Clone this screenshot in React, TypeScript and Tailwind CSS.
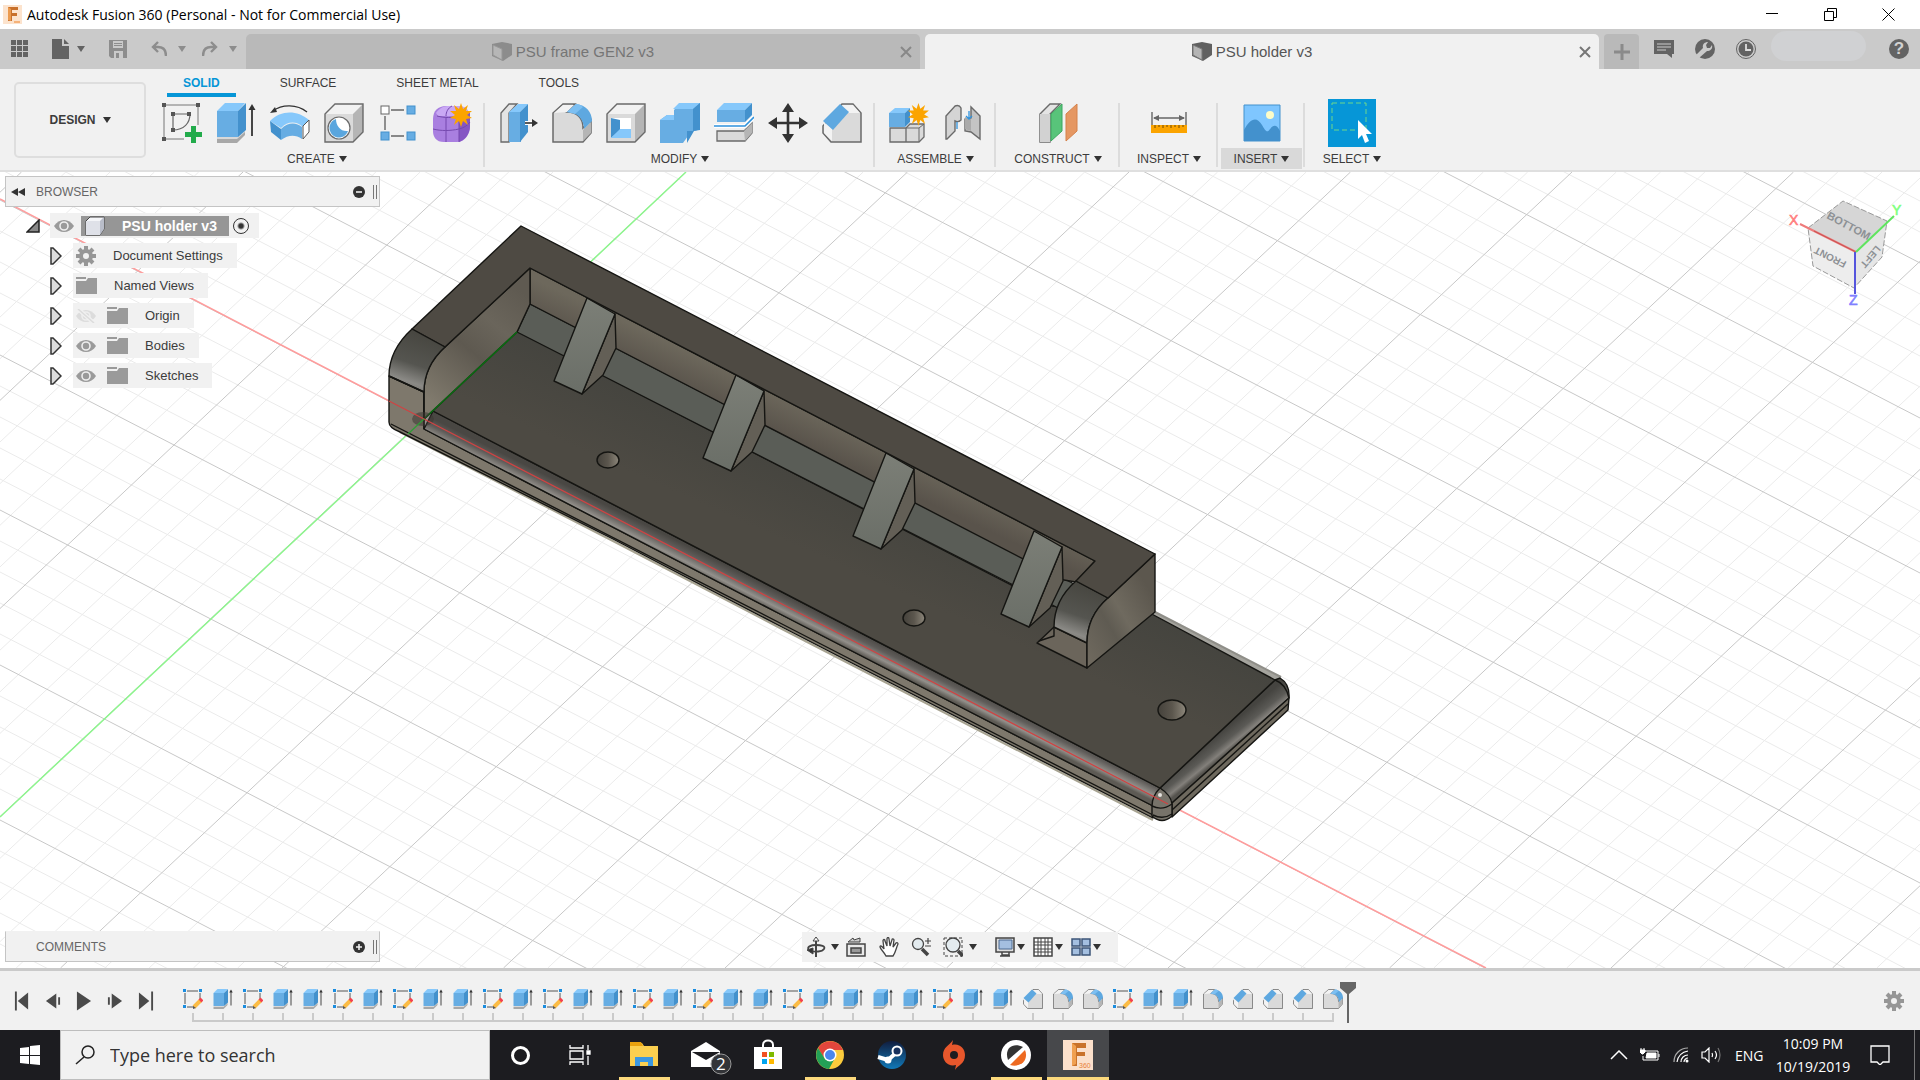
import React from "react";
import type { ReactNode } from "react";
import clsx from "clsx";

interface IconProps {
  className?: string;
}

const STROKE = "#6a6a6a";

function Caret({ className = "fill-[#333]" }: IconProps) {
  return (
    <svg viewBox="0 0 8 6" className={clsx("w-2 h-[6px] shrink-0", className)}>
      <path d="M0 0h8L4 6z" />
    </svg>
  );
}

function Svg40({ className = "size-10", children }: { className?: string; children: ReactNode }) {
  return (
    <svg viewBox="0 0 40 40" className={clsx("shrink-0", className)} fill="none">
      {children}
    </svg>
  );
}

/* ---------- ribbon icons ---------- */

function SketchIcon() {
  return (
    <Svg40>
      <path d="M2 2h34v20M2 2v34h20" stroke="#777" strokeWidth="1" />
      <path d="M11 11h17M11 11v16M28 11c0 9-6 16-17 16" stroke="#666" strokeWidth="1.2" />
      {[[0, 0], [34, 0], [0, 34], [9, 9], [25, 9], [9, 25]].map(([x, y]) => (
        <rect key={`${x}-${y}`} x={x} y={y} width="4" height="4" fill="#555" />
      ))}
      <path d="M29 23h5v6h6v5h-6v6h-5v-6h-6v-5h6z" fill="#22ab4b" />
    </Svg40>
  );
}

function ExtrudeIcon({ className }: IconProps) {
  return (
    <Svg40 className={className}>
      <path d="M1 36h19l9-8v4l-8 8H1z" fill="#a8a8a8" />
      <path d="M1 34h20l8-8v3l-8 7H1z" fill="#d8d8d8" />
      <path d="M1 8l8-8h20l-7 8z" fill="#86c8fb" />
      <path d="M1 8h21v26H1z" fill="#67ade3" />
      <path d="M22 8l8-8v27l-8 7z" fill="#4391cd" />
      <path d="M36 33V4" stroke="#333" strokeWidth="1.8" />
      <path d="M32.500 7L36 1l3.500 6z" fill="#333" />
    </Svg40>
  );
}

function RevolveIcon() {
  return (
    <Svg40>
      <path d="M3 8C12 1 27 1 37 9" stroke="#333" strokeWidth="1.300" />
      <path d="M0 10l5-6 2 5z" fill="#333" />
      <path d="M0 18c11-11 27-11 39-1l-6 7c-7-6-15-6-22 1z" fill="#86c8fb" />
      <path d="M0 18l11 8v11L1 29z" fill="#4391cd" />
      <path d="M11 26c7-7 15-7 21-2v12c-7-5-14-4-21 1z" fill="#67ade3" />
      <path d="M33 23l6-6v12l-6 7z" fill="#fff" stroke="#555" />
    </Svg40>
  );
}

function HoleIcon() {
  return (
    <Svg40>
      <path d="M1 11L11 1h28L29 11z" fill="#f2f2f2" />
      <path d="M29 11L39 1v28L29 39z" fill="#b5b5b5" />
      <path d="M1 11h28v28H1z" fill="#dadada" />
      <path d="M1 11L11 1h28v28L29 39H1z" stroke={STROKE} strokeWidth="1.400" />
      <circle cx="15" cy="25" r="11" fill="#fff" stroke={STROKE} strokeWidth="1.200" />
      <path d="M12 16a9.500 9.500 0 1 0 12 12c-7 1-12-5-12-12z" fill="#5aa6de" />
    </Svg40>
  );
}

function PatternIcon() {
  return (
    <Svg40>
      <path d="M13 7h13M7 13v14M13 33h13" stroke="#666" strokeWidth="1.400" />
      <rect x="3" y="3" width="8" height="8" fill="#fff" stroke="#666" />
      <rect x="29" y="3" width="8" height="8" fill="#67ade3" stroke="#4391cd" />
      <rect x="3" y="29" width="8" height="8" fill="#67ade3" stroke="#4391cd" />
      <rect x="29" y="29" width="8" height="8" fill="#67ade3" stroke="#4391cd" />
    </Svg40>
  );
}

const STAR = "M11 0l2 6 5-4-2 6 6 0-5 4 5 3-6 1 2 6-5-4-2 6-2-6-5 4 2-6-6-1 5-3-5-4 6 0-2-6 5 4z";

function FormIcon() {
  return (
    <Svg40>
      <path d="M1 16C1 8 6 3 14 3h12c8 0 12 5 12 12v8c0 8-5 16-13 16H12C4 39 1 34 1 28z" fill="#a97fe0" />
      <path d="M4 10c4-6 9-7 13-7h10c5 0 8 3 10 6-5 3-6 4-9 4H6z" fill="#c9a8f4" />
      <path d="M27 14c5 0 9-3 11-5v14c0 8-5 14-11 16z" fill="#8656c4" />
      <path d="M1 26c8 2 17 2 26 0 5-1 9-4 11-7M14 14v25M27 14v25M5 13c8 2 15 2 22 0M14 13c0-4 2-8 6-10" stroke="#7549ae" />
      <path d={STAR} fill="#fba400" transform="translate(18 0)" />
    </Svg40>
  );
}

function PressPullIcon() {
  return (
    <Svg40>
      <path d="M3 10l8-9h8l-8 9v29H3z" fill="#e4e4e4" stroke={STROKE} strokeWidth="1.300" />
      <path d="M11 9l9-8h10l-8 8z" fill="#86c8fb" />
      <path d="M11 9h12v30H11z" fill="#67ade3" />
      <path d="M22 9l8-8v28l-8 10z" fill="#4391cd" />
      <path d="M27 20h8" stroke="#fff" strokeWidth="4" />
      <path d="M27 20h8" stroke="#333" strokeWidth="1.600" />
      <path d="M34 16l6 4-6 4z" fill="#333" />
    </Svg40>
  );
}

function FilletIcon({ className }: IconProps) {
  return (
    <Svg40 className={className}>
      <path d="M1 10L11 1h12L15 9c10 0 16 6 16 16l8-8v13l-8 9H1z" fill="#dadada" stroke={STROKE} strokeWidth="1.500" />
      <path d="M2 10L11 2h11l-7 7z" fill="#f3f3f3" />
      <path d="M31 27l8-8v11l-8 8z" fill="#b5b5b5" />
      <path d="M15 9l9-8c10 1 16 8 16 17l-8 8c0-10-7-17-17-17z" fill="#5ea8e0" />
      <path d="M15 9l9-8c3 0 5 1 7 3l-8 7z" fill="#7cbff2" />
    </Svg40>
  );
}

function ShellIcon() {
  return (
    <Svg40>
      <path d="M1 11L11 1h28L29 11z" fill="#f2f2f2" />
      <path d="M29 11L39 1v28L29 39z" fill="#b5b5b5" />
      <path d="M1 11h28v28H1z" fill="#dadada" />
      <path d="M1 11L11 1h28v28L29 39H1z" stroke={STROKE} strokeWidth="1.400" />
      <path d="M5 15h20v20H5z" fill="#fff" />
      <path d="M5 15l9 2v10l-9 8z" fill="#4391cd" />
      <path d="M5 35l9-9h11v9z" fill="#86c8fb" />
    </Svg40>
  );
}

function CombineIcon() {
  return (
    <Svg40>
      <path d="M0 17l7-5h7V7l7-7h19v26l-5 2h-7v5l-5 7H0z" fill="#67ade3" />
      <path d="M13 6l6-6h21l-7 6zM0 17l7-5h7v5z" fill="#86c8fb" />
      <path d="M33 6l7-6v27l-7 1zM27 28h7l-7 12z" fill="#4391cd" />
    </Svg40>
  );
}

function SplitIcon() {
  return (
    <Svg40>
      <path d="M3 28h27l8-8v10l-7 8H3z" fill="#dadada" stroke={STROKE} strokeWidth="1.300" />
      <path d="M30 28l8-8v10l-7 8z" fill="#b5b5b5" />
      <path d="M3 7l7-7h28l-7 7z" fill="#86c8fb" />
      <path d="M3 7h28v12H3z" fill="#67ade3" />
      <path d="M31 7l7-7v12l-7 7z" fill="#4391cd" />
      <path d="M0 23h31l9-9" stroke="#fff" strokeWidth="4" />
      <path d="M0 23h31l9-9" stroke="#3093dd" strokeWidth="1.600" />
    </Svg40>
  );
}

function MoveIcon() {
  return (
    <Svg40>
      <path d="M20 6v28M6 20h28" stroke="#333" strokeWidth="2.600" />
      <path d="M20 0l6 9H14zM20 40l6-9H14zM0 20l9-6v12zM40 20l-9-6v12z" fill="#333" />
    </Svg40>
  );
}

function ChamferIcon({ className }: IconProps) {
  return (
    <Svg40 className={className}>
      <path d="M1 23L20 1h11l8 9v29H9l-8-9z" fill="#dadada" stroke={STROKE} strokeWidth="1.500" />
      <path d="M20 2h11l7 8h-12z" fill="#f3f3f3" />
      <path d="M2 19v11l8 8V26z" fill="#f3f3f3" />
      <path d="M1 18L18 1l9 8-16 18z" fill="#5ea8e0" />
    </Svg40>
  );
}

function ComponentIcon() {
  return (
    <Svg40>
      <path d="M1 25h16v14H1zM17 25l4-4h14v13l-5 5H17z" fill="#dadada" stroke={STROKE} strokeWidth="1.300" />
      <path d="M17 25h13v14M30 25l5-4" stroke={STROKE} />
      <path d="M0 10l6-5h15l-5 5z" fill="#86c8fb" />
      <path d="M0 10h16v14H0z" fill="#67ade3" />
      <path d="M16 10l5-5v14l-5 5z" fill="#4391cd" />
      <path d={STAR} fill="#fba400" transform="translate(19 0) scale(.95)" />
    </Svg40>
  );
}

function JointIcon() {
  return (
    <Svg40>
      <path d="M3 13l9-10c3-1 5 0 6 2v12c-2 2-4 2-6 1v10l-8 8H3z" fill="#d4d4d4" stroke={STROKE} strokeWidth="1.400" />
      <path d="M37 13L28 4v11l-6 1v12l6 1 9 7z" fill="#c4c4c4" stroke={STROKE} strokeWidth="1.400" />
      <path d="M22 14v12l6 2V16z" fill="#aaa" />
      <path d="M14 19v7M26 8v8M23 13l3 3 3-3" stroke="#3093dd" strokeWidth="1.300" />
    </Svg40>
  );
}

function PlaneIcon() {
  return (
    <Svg40>
      <path d="M2 11L12 1h10L12 11v28H2z" fill="#e4e4e4" stroke={STROKE} strokeWidth="1.400" />
      <path d="M2 11h10v28H2z" fill="#d2d2d2" />
      <path d="M13 11L24 1v27L13 38z" fill="#58c47a" stroke="#3ba75e" />
      <path d="M28 11L39 1v27L28 38z" fill="#e59762" stroke="#d5814b" />
    </Svg40>
  );
}

function MeasureIcon() {
  return (
    <Svg40>
      <path d="M3 9v13M37 9v13M5 15h30" stroke="#666" strokeWidth="1.400" />
      <path d="M4 15l6-3v6zM36 15l-6-3v6z" fill="#666" />
      <path d="M2 22h36v8H2z" fill="#fba400" />
      <path d="M6 22v3M10 22v2M14 22v3M18 22v2M22 22v3M26 22v2M30 22v3M34 22v2" stroke="#734b00" />
    </Svg40>
  );
}

function CanvasIcon() {
  return (
    <Svg40>
      <path d="M2 2h36v36H2z" fill="#7fc6ff" stroke="#4391cd" />
      <circle cx="28" cy="12" r="4" fill="#fdfcc8" />
      <path d="M2 27c6-12 13-14 18-5 3 5 5 9 8 4 4-5 7-4 10 2v10H2z" fill="#4391cd" />
    </Svg40>
  );
}

function SelectIcon() {
  return (
    <svg viewBox="0 0 48 48" className="size-12 bg-[#0696d7]">
      <rect x="4" y="4" width="34" height="27" fill="none" stroke="#6ed78a" strokeDasharray="5 3" />
      <path d="M30 21v19l4-4 3 8 4-2-3-7h6z" fill="#fff" />
    </svg>
  );
}

interface RibbonGroup {
  label: string;
  icons: (() => ReactNode)[];
  width: string;
  active?: boolean;
}

const ribbonGroups: RibbonGroup[] = [
  { label: "CREATE", icons: [SketchIcon, ExtrudeIcon, RevolveIcon, HoleIcon, PatternIcon, FormIcon], width: "w-[330px] pr-[6px]" },
  { label: "MODIFY", icons: [PressPullIcon, FilletIcon, ShellIcon, CombineIcon, SplitIcon, MoveIcon, ChamferIcon], width: "w-[390px]" },
  { label: "ASSEMBLE", icons: [ComponentIcon, JointIcon], width: "w-[121px]" },
  { label: "CONSTRUCT", icons: [PlaneIcon], width: "w-[124px]" },
  { label: "INSPECT", icons: [MeasureIcon], width: "w-[98px]" },
  { label: "INSERT", icons: [CanvasIcon], width: "w-[87px]", active: true },
  { label: "SELECT", icons: [SelectIcon], width: "w-[94px]" }
];

/* ---------- title and tab bars ---------- */

function TitleBar() {
  return (
    <header className="flex h-[29px] items-center bg-white pl-[3px] pr-[25px] font-['Open_Sans','Noto_Sans',sans-serif] text-black">
      <svg viewBox="0 0 19 19" className="size-[19px]">
        <path d="M0 0h19v19H0z" fill="#fce3cd" />
        <path d="M5 2h10v3H9v3h5v3H9v5H5z" fill="#c8702b" />
        <path d="M5 2l3 2v12l-3-1z" fill="#eb9a4e" />
        <path d="M11 16h6v2h-6z" fill="#f5b27a" />
      </svg>
      <h1 className="ml-[5px] grow text-[14px] leading-5">Autodesk Fusion 360 (Personal - Not for Commercial Use)</h1>
      <div className="flex gap-[45px]">
        <button aria-label="Minimize">
          <svg viewBox="0 0 13 13" className="size-[13px]" stroke="#000"><path d="M0 5.500h12" /></svg>
        </button>
        <button aria-label="Restore">
          <svg viewBox="0 0 13 13" className="size-[13px]" fill="none" stroke="#000"><path d="M.5 3.500h9v9h-9zM3.500 3V.5h9v9H10" /></svg>
        </button>
        <button aria-label="Close">
          <svg viewBox="0 0 13 13" className="size-[13px]" stroke="#000"><path d="M.5.5l12 12M12.500.5l-12 12" /></svg>
        </button>
      </div>
    </header>
  );
}

function DocCube({ dim }: { dim?: boolean }) {
  return (
    <svg viewBox="0 0 20 20" className={clsx("size-5", dim && "opacity-50")}>
      <path d="M0 2l10-2 10 2v11l-9 6L0 14z" fill="#606060" />
      <path d="M1 3l9 4v11l-9-5z" fill="#b4b4b4" stroke="#777" />
    </svg>
  );
}

function DocTab({ title, active }: { title: string; active?: boolean }) {
  return (
    <div className={clsx("flex h-[35px] flex-1 items-center rounded-t-[5px] pr-2", active ? "bg-[#f1f1f1] text-[#555]" : "bg-[#b9b9b9] text-[#757575]")}>
      <button className="flex grow items-center justify-center gap-1 text-[15px] leading-5">
        <DocCube dim={!active} />
        {title}
      </button>
      <button aria-label={`Close ${title}`}>
        <svg viewBox="0 0 12 12" className="size-3" stroke={active ? "#777" : "#888"} strokeWidth="2"><path d="M1 1l10 10M11 1L1 11" /></svg>
      </button>
    </div>
  );
}

function UndoIcon({ className }: IconProps) {
  return (
    <svg viewBox="0 0 16 16" className={clsx("size-4", className)} fill="none" stroke="#8d8d8d" strokeWidth="2.400">
      <path d="M7 1L2 6l5 5M2 6h5c5 0 8 3 8 9" />
    </svg>
  );
}

function TabBar() {
  return (
    <nav className="flex h-10 items-end bg-[#cacaca]">
      <div className="flex h-10 w-[246px] items-center pl-[11px]">
        <button aria-label="Data panel">
          <svg viewBox="0 0 18 18" className="size-[18px]" fill="#636363">
            {[0, 6, 12].map(x => [0, 6, 12].map(y => <rect key={`${x}-${y}`} x={x} y={y} width="5" height="5" />))}
          </svg>
        </button>
        <button aria-label="File" className="ml-[23px] flex items-center gap-2">
          <svg viewBox="0 0 17 20" className="h-5 w-[17px]" fill="#636363">
            <path d="M0 0h10v7h7v13H0z" />
            <path d="M12 0l5 5h-5z" />
          </svg>
          <Caret className="fill-[#636363]" />
        </button>
        <button aria-label="Save" className="ml-6">
          <svg viewBox="0 0 18 18" className="size-[18px]">
            <path d="M0 0h18v18H2l-2-2z" fill="#8d8d8d" />
            <path d="M4 1h10v7H4zM5 11h9v7H5z" fill="#cacaca" />
            <path d="M5 3h8v1H5zM5 5h8v1H5zM7 13h3v5H7z" fill="#8d8d8d" />
          </svg>
        </button>
        <button aria-label="Undo" className="ml-6 flex items-center gap-[11px]">
          <UndoIcon />
          <Caret className="fill-[#8d8d8d]" />
        </button>
        <button aria-label="Redo" className="ml-4 flex items-center gap-[11px]">
          <UndoIcon className="-scale-x-100" />
          <Caret className="fill-[#8d8d8d]" />
        </button>
      </div>
      <div className="flex grow gap-[5px]">
        <DocTab title="PSU frame GEN2 v3" />
        <DocTab title="PSU holder v3" active />
      </div>
      <button aria-label="New tab" className="ml-[5px] flex h-[35px] w-[35px] items-center justify-center rounded-t-[4px] bg-[#b9b9b9]">
        <svg viewBox="0 0 16 16" className="size-4" stroke="#8a8a8a" strokeWidth="3"><path d="M8 0v16M0 8h16" /></svg>
      </button>
      <div className="flex h-10 items-center pl-[15px] pr-[11px]">
        <button aria-label="Notifications">
          <svg viewBox="0 0 20 20" className="size-5">
            <path d="M0 1h20v14h-2v4l-5-4H0z" fill="#636363" />
            <path d="M3 5h14M3 8h14M3 11h9" stroke="#ccc" />
          </svg>
        </button>
        <button aria-label="Extensions" className="ml-[21px]">
          <svg viewBox="0 0 20 20" className="size-5">
            <circle cx="10" cy="10" r="10" fill="#636363" />
            <path d="M4 19l-3-3 7-7c-1-4 2-6 5-6l-2 3 1 3 3 0 2-3c1 4-2 6-5 6z" fill="#cacaca" />
          </svg>
        </button>
        <button aria-label="Job status" className="ml-[21px]">
          <svg viewBox="0 0 20 20" className="size-5">
            <circle cx="10" cy="10" r="9.500" fill="none" stroke="#636363" />
            <circle cx="10" cy="10" r="7.500" fill="#636363" />
            <path d="M10 5v6h5" fill="none" stroke="#ddd" strokeWidth="1.800" />
          </svg>
        </button>
        <button aria-label="Account" className="mb-[6px] ml-[15px] h-[30px] w-[95px] rounded-full bg-[#d0d1d3]" />
        <button aria-label="Help" className="ml-[23px] flex size-5 items-center justify-center rounded-full bg-[#636363] text-[17px] leading-5 font-bold text-[#d2d2d2]">?</button>
      </div>
    </nav>
  );
}

/* ---------- ribbon ---------- */

function Ribbon() {
  return (
    <div className="flex h-[103px] items-start border-b-2 border-[#dfdfdf] bg-[#f1f1f1] pl-[14px] text-[12px] leading-4 text-[#3c3c3c]">
      <button className="mt-[13px] flex h-[76px] w-[132px] items-center justify-center gap-[7px] rounded-[5px] border-2 border-[#dedede] font-bold">
        DESIGN <Caret />
      </button>
      <div className="ml-[9px]">
        <div className="flex gap-7 pl-3">
          {["SOLID", "SURFACE", "SHEET METAL", "TOOLS"].map(tab => (
            <button
              key={tab}
              className={clsx("border-b-4 px-4 pb-[2px] pt-[6px]", tab === "SOLID" ? "border-[#0696d7] font-bold text-[#0696d7]" : "border-transparent")}
            >
              {tab}
            </button>
          ))}
        </div>
        <div className="mt-[2px] flex">
          {ribbonGroups.map((group, i) => (
            <div key={group.label} className={clsx("relative flex flex-col items-center", group.width)}>
              <div className="flex h-12 items-center">
                {group.icons.map((Icon, n) => (
                  <button key={n} aria-label={`${group.label} tool ${n + 1}`} className="flex w-[54px] justify-center">
                    <Icon />
                  </button>
                ))}
              </div>
              <button className={clsx("mt-px flex h-[21px] items-center gap-1 px-[13px]", group.active && "bg-[#d9d9d9]")}>
                {group.label} <Caret />
              </button>
              {i < ribbonGroups.length - 1 && <span className="absolute right-0 top-1 h-16 w-[2px] bg-[#dcdcdc]" />}
            </div>
          ))}
        </div>
      </div>
    </div>
  );
}

/* ---------- viewport drawing ---------- */

const minorSteps = Array.from({ length: 121 }, (_, i) => i - 60);

function Grid() {
  // both families are parallel lines, every fifth one is darker
  return (
    <g strokeWidth="1">
      {[false, true].map(major =>
        minorSteps
          .filter(k => (k % 5 === 0) === major)
          .map(k => {
            const x = 686 + k * 44.3;
            const y = 200 + k * 31;
            return (
              <g key={k} stroke={major ? "#c8c8c8" : "#ebebeb"}>
                <path d={`M${x} 172L${x - 847} 968`} />
                <path d={`M0 ${y}L1920 ${y + 993}`} />
              </g>
            );
          })
      )}
    </g>
  );
}

const ribs = [[0, 0], [149, 77], [299, 155], [447, 233]];
const holes = [[608, 460, 11, 8], [914, 618, 11, 8], [1172, 710, 14, 10]];

function Model() {
  return (
    <g stroke="#151512" strokeWidth="1.400" strokeLinejoin="round">
      <defs>
        <linearGradient id="floor" gradientUnits="userSpaceOnUse" x1="620" y1="360" x2="580" y2="450">
          <stop offset="0" stopColor="#43433e" />
          <stop offset="1" stopColor="#4d4a43" />
        </linearGradient>
        <linearGradient id="edge" gradientUnits="userSpaceOnUse" x1="800" y1="602" x2="791" y2="620">
          <stop offset="0" stopColor="#494743" />
          <stop offset=".35" stopColor="#5f5c59" />
          <stop offset=".75" stopColor="#93908b" />
          <stop offset="1" stopColor="#5d5a54" />
        </linearGradient>
        <linearGradient id="endEdge" gradientUnits="userSpaceOnUse" x1="1218" y1="734" x2="1231" y2="750">
          <stop offset="0" stopColor="#454440" />
          <stop offset=".5" stopColor="#5b5a56" />
          <stop offset=".8" stopColor="#83807b" />
          <stop offset="1" stopColor="#55534e" />
        </linearGradient>
        <linearGradient id="side" gradientUnits="userSpaceOnUse" x1="520" y1="290" x2="430" y2="400">
          <stop offset="0" stopColor="#5f5a51" />
          <stop offset=".3" stopColor="#6a655b" />
          <stop offset=".55" stopColor="#5e5950" />
          <stop offset="1" stopColor="#807a6d" />
        </linearGradient>
        <linearGradient id="wall" gradientUnits="userSpaceOnUse" x1="660" y1="338" x2="645" y2="370">
          <stop offset="0" stopColor="#6d685c" />
          <stop offset="1" stopColor="#59534b" />
        </linearGradient>
        <linearGradient id="round" x1=".4" y1="0" x2=".1" y2="1">
          <stop offset="0" stopColor="#474640" />
          <stop offset=".5" stopColor="#555550" />
          <stop offset=".78" stopColor="#8b8a86" />
          <stop offset="1" stopColor="#65615a" />
        </linearGradient>
        <linearGradient id="rib" x1="0" y1="0" x2="0" y2="1">
          <stop offset="0" stopColor="#7c7f77" />
          <stop offset="1" stopColor="#6a6e67" />
        </linearGradient>
        <linearGradient id="block" x1="1" y1="0" x2="0" y2="1">
          <stop offset=".2" stopColor="#5c574e" />
          <stop offset=".5" stopColor="#6f6a5f" />
          <stop offset=".65" stopColor="#5f5b52" />
          <stop offset="1" stopColor="#716b60" />
        </linearGradient>
        <linearGradient id="hole">
          <stop offset="0" stopColor="#44413b" />
          <stop offset=".5" stopColor="#5b564d" />
          <stop offset="1" stopColor="#8d877b" />
        </linearGradient>
      </defs>

      {/* far rounded edge and underside highlight */}
      <path d="M1148 612L1155 612 1280 677 1275 680z" fill="#a5a49e" stroke="none" />
      <path d="M1155 612L1281 677" stroke="#8f8e88" strokeWidth="2" />
      <path d="M400 432L613 541 780 628 1153 820" stroke="#a7a391" strokeWidth="2" fill="none" />

      {/* base plate */}
      <path d="M389 376L424 392 424 429 780 614 1153 806 1153 818 780 626 613 539 400 432Q389 428 389 422z" fill="#7e786c" />
      <path d="M433 411L1160 788 1153 806 780 614 424 429z" fill="url(#edge)" />
      <path d="M391 424L780 623 1153 815" fill="none" />
      <path d="M1160 788L1275 680 1280 678Q1290 684 1289 698L1172 803z" fill="url(#endEdge)" />
      <path d="M1172 803L1289 698 1288 710 1172 817z" fill="#6e695e" />
      <path d="M1275 680Q1286 684 1289 698" fill="none" />
      <path d="M1172 810L1288 704" fill="none" />
      <path d="M1160 788Q1152 796 1152 806V816Q1162 825 1172 816V804Q1171 795 1160 788z" fill="#77736a" />
      <path d="M1152 806Q1162 811 1172 804M1153 815Q1163 820 1172 814" fill="none" />
      <circle cx="1160" cy="795" r="2" fill="#e5e3df" stroke="none" />
      <path d="M433 411L424 419 517 331 1052 606 1148 612 1275 680 1160 788z" fill="url(#floor)" />

      {/* back wall and chamfer */}
      <path d="M530 304L1080 587 1066 612 517 332z" fill="#5a5d57" />
      <path d="M530 268L1095 561 1076 582 1064 580 530 304z" fill="url(#wall)" />
      <path d="M530 268V304L517 332 424 419V392Q424 366 445 347z" fill="url(#side)" />
      <path d="M424 419L517 332" stroke="#0b6b12" strokeWidth="1.600" />

      {ribs.map(([x, y]) => (
        <g key={x} transform={`translate(${x} ${y})`}>
          <path d="M615 314L616 348 603 375 582 394z" fill="#635f56" />
          <path d="M587 298L615 314 582 394 554 381z" fill="url(#rib)" />
        </g>
      ))}

      {/* right-hand stop */}
      <path d="M1037 643L1054 627 1087 643V668z" fill="#6b655b" />
      <path d="M1039 641L1054 636V627" fill="none" />
      <path d="M1076 581Q1054 600 1054 627L1087 643Q1087 616 1108 598z" fill="url(#round)" />
      <path d="M1155 554V612L1087 668V643Q1087 616 1108 598z" fill="url(#block)" />

      {/* top face */}
      <path d="M521 226L1155 554 1108 598 1076 581 1095 561 530 268 445 347 412 329z" fill="#4e4a43" />
      <path d="M412 329Q389 350 389 376L424 392Q424 366 445 347z" fill="url(#round)" />
      <path d="M389 376L424 392V429" fill="none" />

      {holes.map(([cx, cy, rx, ry]) => (
        <ellipse key={cx} cx={cx} cy={cy} rx={rx} ry={ry} fill="url(#hole)" />
      ))}
      <ellipse cx="423" cy="419" rx="11" ry="7" fill="#3a3732" fillOpacity=".55" stroke="none" />
    </g>
  );
}

function ViewCube() {
  return (
    <g fontFamily="Liberation Sans, Arial, sans-serif" fontWeight="bold">
      <path d="M1808 228L1856 252 1854 288 1813 266z" fill="#ededed" />
      <path d="M1856 252L1887 221 1882 257 1854 288z" fill="#e6e6e6" />
      <path d="M1808 228L1843 201 1887 221 1856 252z" fill="#d6d6d6" />
      <path d="M1808 228L1843 201 1887 221 1882 257 1854 288 1813 266z" fill="none" stroke="#999" strokeDasharray="6 2" />
      <text x="1826" y="218" fontSize="11" fill="#8d9195" transform="rotate(28 1826 218)">BOTTOM</text>
      <text x="1847" y="262" fontSize="10" fill="#8d9195" transform="rotate(207 1847 262)">FRONT</text>
      <text x="1876" y="245" fontSize="10" fill="#8d9195" transform="rotate(130 1876 245)">LEFT</text>
      <path d="M1800 224L1856 252" stroke="#ee7b7b" strokeWidth="2" />
      <path d="M1814 231L1856 252" stroke="#c65050" strokeWidth="1" />
      <path d="M1856 252L1894 216" stroke="#5fe45f" strokeWidth="2" />
      <path d="M1855 252V294" stroke="#5555dd" strokeWidth="2" />
      <g fontSize="14" fontWeight="normal" strokeWidth=".6">
        <text x="1789" y="225" fill="#ff7f7f" stroke="#ff7f7f">X</text>
        <text x="1892" y="215" fill="#7fff7f" stroke="#7fff7f">Y</text>
        <text x="1849" y="305" fill="#8080ff" stroke="#8080ff">Z</text>
      </g>
    </g>
  );
}

function Viewport() {
  return (
    <svg viewBox="0 172 1920 796" preserveAspectRatio="xMidYMid slice" className="absolute inset-0 h-full w-full" role="img" aria-label="Model view">
      <path d="M0 172h1920v796H0z" fill="#fff" />
      <Grid />
      <path d="M0 199L424 419M1168 804L1486 968" stroke="#ff9c9c" strokeWidth="1.500" />
      <path d="M0 817L424 419 686 172" stroke="#8df58d" strokeWidth="1.500" fill="none" />
      <Model />
      <path d="M389 401L424 419 780 603 1168 804" stroke="#cf4343" strokeWidth="1.300" fill="none" />
      <path d="M408 434L424 419" stroke="#2f9c35" strokeWidth="1.300" />
      <ViewCube />
    </svg>
  );
}

/* ---------- browser tree ---------- */

function EyeIcon({ off }: { off?: boolean }) {
  return (
    <svg viewBox="0 0 20 14" className="h-[14px] w-5 shrink-0">
      <path d="M0 7c5-8 15-8 20 0-5 8-15 8-20 0z" fill={off ? "#dcdcdc" : "#9a9a9a"} />
      <circle cx="10" cy="7" r="4" fill="none" stroke="#eee" strokeWidth="1.600" />
      {off && <path d="M2 0l16 14" stroke="#f1f1f1" strokeWidth="4" />}
      {off && <path d="M2 0l16 14" stroke="#dcdcdc" strokeWidth="1.500" />}
    </svg>
  );
}

function FolderIcon() {
  return (
    <svg viewBox="0 0 21 17" className="h-[17px] w-[21px] shrink-0" fill="#9a9a9a">
      <path d="M0 0h10v2H0zM0 4h10l2-3h9v16H0z" />
    </svg>
  );
}

function GearIcon() {
  return (
    <svg viewBox="0 0 20 20" className="size-5 shrink-0">
      <g fill="none" stroke="#969696">
        <circle cx="10" cy="10" r="5" strokeWidth="4" />
        <path d="M10 0v4M10 16v4M0 10h4M16 10h4M3 3l3 3M14 14l3 3M17 3l-3 3M6 14l-3 3" strokeWidth="4" />
      </g>
    </svg>
  );
}

const treeRows = [
  { label: "Document Settings", icon: "gear" },
  { label: "Named Views", icon: "folder" },
  { label: "Origin", icon: "folder", eye: "off" },
  { label: "Bodies", icon: "folder", eye: "on" },
  { label: "Sketches", icon: "folder", eye: "on" }
];

function PanelBar({ title, children, sign, className }: { title: string; children?: ReactNode; sign: string; className?: string }) {
  return (
    <div className={clsx("flex h-[31px] w-[375px] items-center border border-[#c4c4c4] bg-[#f1f1f1] pr-[2px]", className)}>
      <span className="flex w-[30px] pl-[5px]">{children}</span>
      <h2 className="grow text-[12px] leading-4 text-[#666]">{title}</h2>
      <button aria-label={`Toggle ${title}`}>
        <svg viewBox="0 0 12 12" className="size-3">
          <circle cx="6" cy="6" r="6" fill="#333" />
          <path d={sign} stroke="#f1f1f1" strokeWidth="1.600" />
        </svg>
      </button>
      <span className="ml-2 h-[14px] w-1 border-x border-[#777]" />
    </div>
  );
}

function BrowserPanel() {
  return (
    <aside className="relative self-start pl-[5px] pt-1">
      <PanelBar title="BROWSER" sign="M3 6h6">
        <svg viewBox="0 0 14 8" className="h-2 w-[14px]" fill="#333"><path d="M7 0v8L0 4zM14 0v8L7 4z" /></svg>
      </PanelBar>
      <ul className="mt-[6px] flex flex-col gap-[5px] text-[13px] leading-4 text-[#3c3c3c]">
        <li className="flex h-[25px] items-center pl-[21px]">
          <button aria-label="Collapse PSU holder v3">
            <svg viewBox="0 0 14 14" className="size-[14px]"><path d="M13 1v12H1z" fill="#888" stroke="#222" strokeWidth="1.500" /></svg>
          </button>
          <div className="ml-[10px] flex h-[25px] items-center bg-[#f1f1f1] pl-1 pr-[10px]">
            <EyeIcon />
            <button className="ml-[7px] flex h-5 items-center bg-[#969696] pl-1 pr-3 text-[14px] font-bold text-white">
              <svg viewBox="0 0 20 20" className="mr-[17px] size-5">
                <path d="M1 5l4-4h14v12l-4 6H1z" fill="#f4f5f8" stroke="#444" />
                <path d="M15 5l4-4v12l-4 6z" fill="#b9bdc9" />
                <path d="M1 5h14v14H1z" fill="#dfe1e8" />
              </svg>
              PSU holder v3
            </button>
            <input type="radio" defaultChecked aria-label="Activate PSU holder v3" className="ml-1 size-4 appearance-none rounded-full border border-[#333] bg-[radial-gradient(circle,#333_2px,#f1f1f1_4px)]" />
          </div>
        </li>
        {treeRows.map(row => (
          <li key={row.label} className="flex h-[25px] items-center pl-[45px]">
            <button aria-label={`Expand ${row.label}`}>
              <svg viewBox="0 0 12 18" className="h-[18px] w-3"><path d="M1 1h2l8 8-8 8H1z" fill="#dcdcdc" stroke="#333" strokeWidth="1.500" /></svg>
            </button>
            <div className="ml-[11px] flex h-[25px] items-center bg-[#f1f1f1] pl-[3px] pr-[14px]">
              {row.eye && (
                <span className="mr-[11px]">
                  <EyeIcon off={row.eye === "off"} />
                </span>
              )}
              {row.icon === "gear" ? <GearIcon /> : <FolderIcon />}
              <button className="ml-[17px]">{row.label}</button>
            </div>
          </li>
        ))}
      </ul>
    </aside>
  );
}

/* ---------- navigation bar ---------- */

function NavIcon({ children }: { children: ReactNode }) {
  return (
    <svg viewBox="0 0 20 20" className="size-5" fill="none" stroke="#444">
      {children}
    </svg>
  );
}

function NavBar() {
  return (
    <div className="flex h-[30px] items-center bg-[#f1f1f1] pl-1 pr-[17px]">
      <button aria-label="Orbit" className="flex items-center gap-[5px]">
        <NavIcon>
          <path d="M10 1v19" strokeWidth="2" />
          <path d="M7 4l3-4 3 4z" fill="#fff" />
          <path d="M3 13c-3-3 2-5 7-5s10 1 8 4c-2 3-9 3-13 2" strokeWidth="1.800" />
          <path d="M1 13l6-2v6z" fill="#333" />
        </NavIcon>
        <Caret />
      </button>
      <button aria-label="Look at" className="ml-[7px]">
        <NavIcon>
          <path d="M1 7h18v12H1z" fill="#e9e9e9" strokeWidth="1.500" />
          <path d="M5 11h10v5H5z" fill="#999" strokeWidth="1.500" />
          <path d="M2 5l5-4 1 2 6-2v4z" fill="#ccc" />
        </NavIcon>
      </button>
      <button aria-label="Pan" className="ml-[13px]">
        <NavIcon>
          <path d="M7 19C5 15 2 13 1 10c0-2 2-1 4 2L4 4c0-2 2-2 2 0l2 5V2c0-2 2-2 2 0l1 7 2-6c0-2 2-1 2 0l-1 7 3-4c1-1 2 0 2 1-2 4-2 8-5 12z" fill="#fff" strokeWidth="1.300" />
        </NavIcon>
      </button>
      <button aria-label="Zoom" className="ml-3">
        <NavIcon>
          <circle cx="7" cy="7" r="5.500" fill="#e3ebef" strokeWidth="1.300" />
          <path d="M11 12l6 6" strokeWidth="3.500" />
          <path d="M14 4h6M17 1v6M14 9h6" strokeWidth="1.200" />
        </NavIcon>
      </button>
      <button aria-label="Fit" className="ml-3 flex items-center gap-[6px]">
        <NavIcon>
          <path d="M1 1h18v18H1z" strokeDasharray="3 2" />
          <circle cx="10" cy="8" r="7" fill="#e3ebef" strokeWidth="1.300" />
          <path d="M15 14l5 5" strokeWidth="3.500" />
        </NavIcon>
        <Caret />
      </button>
      <button aria-label="Display settings" className="ml-[18px] flex items-center gap-[2px]">
        <NavIcon>
          <path d="M1 1h18v14H1z" fill="#ddd" strokeWidth="1.500" />
          <path d="M4 3h13v9H4z" fill="#a4bfe0" stroke="#4d6a92" />
          <path d="M7 15v3h7v-3M5 19h10" strokeWidth="1.500" />
        </NavIcon>
        <Caret />
      </button>
      <button aria-label="Grid and snaps" className="ml-2 flex items-center gap-[2px]">
        <NavIcon>
          <path d="M1 1h18v18H1z" fill="#fff" strokeWidth="1.500" />
          <path d="M5 1v18M8 1v18M12 1v18M15 1v18M1 5h18M1 8h18M1 12h18M1 15h18" />
        </NavIcon>
        <Caret />
      </button>
      <button aria-label="Viewports" className="ml-2 flex items-center gap-[2px]">
        <NavIcon>
          <path d="M1 2h8v7H1zM11 2h8v7h-8zM1 11h8v7H1zM11 11h8v7h-8z" fill="#a4bfe0" stroke="#3d5578" strokeWidth="1.500" />
        </NavIcon>
        <Caret />
      </button>
    </div>
  );
}

/* ---------- timeline ---------- */

function TimelineSketch() {
  return (
    <svg viewBox="0 0 20 20" className="size-5" fill="none">
      <path d="M4 2h11M2 4v11M17 4v8M4 18h8" stroke="#555" />
      <path d="M0 0h3v3H0zM16 0h3v3h-3zM0 16h3v3H0z" fill="#1a8de0" />
      <path d="M11 18l7-7" stroke="#fbbc45" strokeWidth="4" />
      <path d="M17 12l2-2" stroke="#f4434f" strokeWidth="4" />
      <path d="M10 17l3 2-3 1z" fill="#555" />
    </svg>
  );
}

// s: sketch, e: extrude, c: chamfer, f: fillet
const features = "seseesesee seseesesee seeeeseecf fseefcccf".replace(/ /g, "").split("");

const featureNames: Record<string, string> = { s: "Sketch", e: "Extrude", c: "Chamfer", f: "Fillet" };

function FeatureIcon({ kind }: { kind: string }) {
  if (kind === "s") return <TimelineSketch />;
  if (kind === "e") return <ExtrudeIcon className="size-5" />;
  if (kind === "c") return <ChamferIcon className="size-5" />;
  return <FilletIcon className="size-5" />;
}

const playback = [
  { label: "First", d: "M1 0h2v20H1zM15 1v18L4 10z" },
  { label: "Step back", d: "M1 10L12 2v16zM14 6h2v8h-2z" },
  { label: "Play", d: "M1 0l15 10L1 20z" },
  { label: "Step forward", d: "M16 10L5 2v16zM1 6h2v8H1z" },
  { label: "Last", d: "M14 0h2v20h-2zM1 1v18l11-9z" }
];

function Timeline() {
  return (
    <div className="flex h-[62px] items-start border-t-[3px] border-[#cacaca] bg-[#f1f1f1]">
      <div className="flex gap-[15px] pl-[14px] pt-5">
        {playback.map(item => (
          <button key={item.label} aria-label={item.label}>
            <svg viewBox="0 0 17 20" className="h-5 w-4" fill="#4a4a4a"><path d={item.d} /></svg>
          </button>
        ))}
      </div>
      <div className="ml-6 flex pt-[18px]">
        {features.map((kind, i) => (
          <div key={i} className="flex w-[30px] flex-col items-center">
            <button aria-label={`${featureNames[kind]} ${i + 1}`}>
              <FeatureIcon kind={kind} />
            </button>
            <div
              className={clsx(
                "mt-1 flex h-[9px] w-full flex-col items-center",
                i === 0 && "bg-[linear-gradient(#cacaca,#cacaca)] bg-[length:50%_2px] bg-right-bottom bg-no-repeat",
                i === features.length - 1 && "bg-[linear-gradient(#cacaca,#cacaca)] bg-[length:50%_2px] bg-left-bottom bg-no-repeat",
                i > 0 && i < features.length - 1 && "border-b-2 border-[#cacaca]"
              )}
            >
              <span className="h-[9px] w-[2px] bg-[#cacaca]" />
            </div>
          </div>
        ))}
      </div>
      <svg viewBox="0 0 16 41" className="mt-[11px] -ml-2 h-[41px] w-4" fill="#666">
        <path d="M0 0h16v6L9 12v29H7V12L0 6z" />
      </svg>
      <button aria-label="Timeline settings" className="ml-auto mr-4 mt-5">
        <GearIcon />
      </button>
    </div>
  );
}

/* ---------- windows taskbar ---------- */

const apps: { name: string; open?: boolean; active?: boolean; icon: ReactNode }[] = [
  {
    name: "File Explorer",
    open: true,
    icon: (
      <>
        <path d="M2 4h12l2 3h14v20H2z" fill="#fbcf4f" />
        <path d="M2 3h11l2 4H2z" fill="#e8a10e" />
        <path d="M7 18h18v9h-5v-4h-8v4H7z" fill="#3b97e0" />
      </>
    )
  },
  {
    name: "Mail",
    icon: (
      <>
        <path d="M1 12L16 3l14 9v16H1z" fill="#fff" />
        <path d="M2 13h28L16 21z" fill="#1c1c20" />
        <circle cx="31" cy="25" r="10" fill="#333438" stroke="#999" />
        <text x="26" y="31" fontSize="17" fill="#fff" fontFamily="Open Sans, sans-serif">2</text>
      </>
    )
  },
  {
    name: "Store",
    icon: (
      <>
        <path d="M11 9V6c0-6 10-6 10 0v3" stroke="#fff" fill="none" strokeWidth="2" />
        <path d="M2 8h28v22H2z" fill="#fff" />
        <path d="M10 13h5v5h-5z" fill="#f25022" />
        <path d="M17 13h5v5h-5z" fill="#7fba00" />
        <path d="M10 20h5v5h-5z" fill="#00a4ef" />
        <path d="M17 20h5v5h-5z" fill="#ffb900" />
      </>
    )
  },
  {
    name: "Chrome",
    open: true,
    icon: (
      <>
        <circle cx="16" cy="16" r="14" fill="#fbcb3c" />
        <path d="M4 9a14 14 0 0 1 25 2H16l-6 8z" fill="#e2463c" />
        <path d="M4 9a14 14 0 0 0 11 21l6-11-10 1z" fill="#23a056" />
        <circle cx="16" cy="16" r="6.500" fill="#fff" />
        <circle cx="16" cy="16" r="5" fill="#4a87ee" />
      </>
    )
  },
  {
    name: "Steam",
    icon: (
      <>
        <defs>
          <linearGradient id="steam" x1="0" y1="0" x2="0" y2="1">
            <stop offset="0" stopColor="#111d3e" />
            <stop offset="1" stopColor="#1179b8" />
          </linearGradient>
        </defs>
        <circle cx="16" cy="16" r="14" fill="url(#steam)" />
        <path d="M2 18l10 3 9-8" stroke="#fff" strokeWidth="4" fill="none" />
        <circle cx="21" cy="12" r="4.500" fill="#16305c" stroke="#fff" strokeWidth="2" />
        <circle cx="12" cy="21" r="3.500" fill="#fff" />
      </>
    )
  },
  {
    name: "Origin",
    icon: (
      <>
        <path d="M15 1l-1 5c8-2 13 4 13 10 0 9-7 10-10 15l1-5C10 28 5 22 5 16 5 8 11 7 15 1z" fill="#e8572c" />
        <circle cx="16" cy="16" r="4" fill="#1c1c20" />
      </>
    )
  },
  {
    name: "PrusaSlicer",
    open: true,
    icon: (
      <>
        <circle cx="16" cy="16" r="15" fill="#fff" />
        <path d="M8 21C4 10 12 3 23 8z" fill="#333" />
        <path d="M25 11c4 10-4 18-15 15z" fill="#ee6a21" />
      </>
    )
  },
  {
    name: "Fusion 360",
    open: true,
    active: true,
    icon: (
      <>
        <path d="M1 1h30v30H1z" fill="#fbe0cb" />
        <path d="M10 4h14v5h-9v4h8v4h-8v10h-5z" fill="#c9722a" />
        <path d="M10 4l4 3v18l-4 2z" fill="#f0a050" />
        <text x="17" y="29" fontSize="7" fill="#e8803a" fontFamily="Liberation Sans, sans-serif">360</text>
      </>
    )
  }
];

function Taskbar() {
  return (
    <footer className="flex h-[50px] items-stretch bg-[#1c1c20] font-['Open_Sans','Noto_Sans',sans-serif] text-white">
      <button aria-label="Start" className="flex w-[60px] items-center justify-center">
        <svg viewBox="0 0 20 20" className="size-5" fill="#fff">
          <path d="M0 3l9-1v8H0zM10 1l10-1v10H10zM0 11h9v8l-9-1zM10 11h10v9l-10-1z" />
        </svg>
      </button>
      <label className="flex w-[430px] items-center border border-[#bdbdbd] bg-[#f1f1f1] pl-[14px]">
        <svg viewBox="0 0 20 20" className="size-5" fill="none" stroke="#222" strokeWidth="1.500">
          <circle cx="13" cy="7" r="6" />
          <path d="M9 12l-8 7" />
        </svg>
        <input type="text" placeholder="Type here to search" className="ml-[15px] grow bg-transparent text-[18px] leading-6 outline-none placeholder:text-[#333]" />
      </label>
      <button aria-label="Cortana" className="flex w-[60px] items-center justify-center">
        <span className="size-[19px] rounded-full border-[3px] border-white" />
      </button>
      <button aria-label="Task View" className="flex w-[60px] items-center justify-center">
        <svg viewBox="0 0 22 20" className="h-5 w-[22px]" fill="none" stroke="#fff" strokeWidth="1.300">
          <path d="M1 0v3h13V0M1 20v-3h13v3M1 6h13v8H1zM19 0v5M19 11v9" />
          <path d="M18 6h3v3h-3z" fill="#fff" />
        </svg>
      </button>
      <div className="ml-[3px] flex">
        {apps.map(app => (
          <button key={app.name} aria-label={app.name} className={clsx("flex w-[62px] flex-col items-center justify-between", app.active && "bg-[#47484b]")}>
            <svg viewBox="0 0 32 32" className="mt-[9px] size-8 overflow-visible">{app.icon}</svg>
            {app.open && <span className={clsx("h-[3px] bg-[#fcd97c]", app.active ? "w-full" : "w-[51px]")} />}
          </button>
        ))}
      </div>
      <div className="ml-auto flex items-center text-[14px] leading-[23px]">
        <button aria-label="Show hidden icons">
          <svg viewBox="0 0 18 10" className="h-[10px] w-[18px]" fill="none" stroke="#fff" strokeWidth="1.500"><path d="M1 9l8-8 8 8" /></svg>
        </button>
        <svg viewBox="0 0 20 16" className="ml-3 h-4 w-5" fill="none" stroke="#fff">
          <path d="M5 4h13v9H3V9M19 7v3M1 1v2M4 1v2" />
          <path d="M7 6h9v5H6z" fill="#fff" />
          <path d="M0 3h5v2L3 7H2L0 5z" fill="#fff" />
        </svg>
        <svg viewBox="0 0 16 16" className="ml-[13px] size-4" fill="none" stroke="#fff" strokeWidth="1.200">
          <path d="M1 15C1 7 7 1 15 1" stroke="#aaa" />
          <path d="M4 15C5 9 9 5 15 4M8 15c0-4 3-7 7-7M11 15c0-2 2-4 4-4" />
          <circle cx="14" cy="14" r="1.500" fill="#fff" stroke="none" />
        </svg>
        <svg viewBox="0 0 20 16" className="ml-3 h-4 w-5" fill="none" stroke="#fff" strokeWidth="1.200">
          <path d="M1 5h3l4-4v14l-4-4H1zM11 6q1 2 0 4M14 4q3 4 0 8" />
          <path d="M17 1q4 7 0 14" stroke="#777" />
        </svg>
        <span className="ml-[14px] w-7">ENG</span>
        <div className="ml-3 w-[76px] text-center">
          <p>10:09 PM</p>
          <p>10/19/2019</p>
        </div>
        <button aria-label="Notifications" className="ml-[19px]">
          <svg viewBox="0 0 20 20" className="size-5" fill="none" stroke="#fff" strokeWidth="1.300"><path d="M1 1h18v16h-6l-3 3-3-3H1z" /></svg>
        </button>
        <span className="ml-6 mr-[5px] h-[50px] w-px bg-[#777]" />
      </div>
    </footer>
  );
}

export default function App() {
  return (
    <div className="flex min-h-screen flex-col bg-[#f1f1f1] font-['Liberation_Sans',Arial,sans-serif]">
      <TitleBar />
      <TabBar />
      <Ribbon />
      <main className="relative flex grow flex-col justify-between">
        <Viewport />
        <BrowserPanel />
        <div className="relative grid grid-cols-[1fr_auto_1fr] items-end pb-[6px]">
          <PanelBar title="COMMENTS" sign="M3 6h6M6 3v6" className="ml-[5px] border-t-transparent" />
          <NavBar />
        </div>
      </main>
      <Timeline />
      <Taskbar />
    </div>
  );
}
